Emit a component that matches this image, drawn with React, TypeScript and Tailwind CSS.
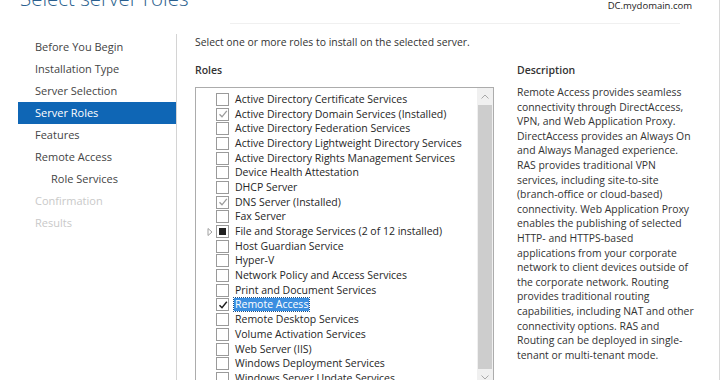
import React from "react";

const font = { fontFamily: '"Open Sans", "Noto Sans", "Liberation Sans", sans-serif' };

type Role = { label: string; state: "none" | "installed" | "checked" | "partial"; expander?: boolean; selected?: boolean };

const roles: Role[] = [
  { label: "Active Directory Certificate Services", state: "none" },
  { label: "Active Directory Domain Services (Installed)", state: "installed" },
  { label: "Active Directory Federation Services", state: "none" },
  { label: "Active Directory Lightweight Directory Services", state: "none" },
  { label: "Active Directory Rights Management Services", state: "none" },
  { label: "Device Health Attestation", state: "none" },
  { label: "DHCP Server", state: "none" },
  { label: "DNS Server (Installed)", state: "installed" },
  { label: "Fax Server", state: "none" },
  { label: "File and Storage Services (2 of 12 installed)", state: "partial", expander: true },
  { label: "Host Guardian Service", state: "none" },
  { label: "Hyper-V", state: "none" },
  { label: "Network Policy and Access Services", state: "none" },
  { label: "Print and Document Services", state: "none" },
  { label: "Remote Access", state: "checked", selected: true },
  { label: "Remote Desktop Services", state: "none" },
  { label: "Volume Activation Services", state: "none" },
  { label: "Web Server (IIS)", state: "none" },
  { label: "Windows Deployment Services", state: "none" },
  { label: "Windows Server Update Services", state: "none" },
];

const desc = [
  "Remote Access provides seamless",
  "connectivity through DirectAccess,",
  "VPN, and Web Application Proxy.",
  "DirectAccess provides an Always On",
  "and Always Managed experience.",
  "RAS provides traditional VPN",
  "services, including site-to-site",
  "(branch-office or cloud-based)",
  "connectivity. Web Application Proxy",
  "enables the publishing of selected",
  "HTTP- and HTTPS-based",
  "applications from your corporate",
  "network to client devices outside of",
  "the corporate network. Routing",
  "provides traditional routing",
  "capabilities, including NAT and other",
  "connectivity options. RAS and",
  "Routing can be deployed in single-",
  "tenant or multi-tenant mode.",
];

const nav: { label: string; active?: boolean; indent?: boolean; disabled?: boolean }[] = [
  { label: "Before You Begin" },
  { label: "Installation Type" },
  { label: "Server Selection" },
  { label: "Server Roles", active: true },
  { label: "Features" },
  { label: "Remote Access" },
  { label: "Role Services", indent: true },
  { label: "Confirmation", disabled: true },
  { label: "Results", disabled: true },
];

function Check({ state }: { state: Role["state"] }) {
  return (
    <div className="w-[13px] h-[13px] border border-[#9a9a9a] bg-white flex items-center justify-center shrink-0">
      {state === "installed" && (
        <svg width="10" height="10" viewBox="0 0 10 10">
          <path d="M1.5 5.2 L4 7.8 L8.8 1.8" fill="none" stroke="#9b9b9b" strokeWidth="1.3" />
        </svg>
      )}
      {state === "checked" && (
        <svg width="10" height="10" viewBox="0 0 10 10">
          <path d="M1.5 5.2 L4 7.8 L8.8 1.8" fill="none" stroke="#1a1a1a" strokeWidth="1.4" />
        </svg>
      )}
      {state === "partial" && <div className="w-[7px] h-[7px] bg-[#222]" />}
    </div>
  );
}

export default function App() {
  return (
    <div className="w-[720px] h-[380px] overflow-hidden bg-white relative text-[#333]" style={font}>
      <div className="absolute right-0 top-0 bottom-0 w-px bg-[#d8d8d8]" />
      {/* header */}
      <div className="h-[34px] relative flex">
        <div className="pl-[20px] h-[24px] overflow-hidden flex-1">
          <div className="text-[20.5px] leading-[24px] font-light text-[#2b5f8e] mt-[-14px] whitespace-nowrap">
            Select server roles
          </div>
        </div>
        <div className="pr-[28px] text-[9.5px] leading-[11px] text-[#222]">DC.mydomain.com</div>
        <div className="absolute left-[230px] right-[40px] top-[23px] h-px bg-[#f0f0f0]" />
      </div>
      <div className="flex h-[346px]">
        {/* nav */}
        <div className="w-[177px] border-r border-[#d4d4d4] pt-[2px] shrink-0">
          {nav.map((n) => (
            <div
              key={n.label}
              className={
                "h-[22px] flex items-center text-[11px] whitespace-nowrap ml-[18px] pl-[17px] " +
                (n.active ? "bg-[#0f66b5] text-white" : n.disabled ? "text-[#c9c9c9]" : "text-[#444]")
              }
            >
              <span className={n.indent ? "pl-[16px]" : ""}>{n.label}</span>
            </div>
          ))}
        </div>
        {/* main */}
        <div className="pl-[18px] flex gap-[23px]">
          <div className="w-[299px] flex flex-col shrink-0">
            <div className="h-[16px] text-[10.4px] leading-[16px] whitespace-nowrap text-[#333]">
              Select one or more roles to install on the selected server.
            </div>
            <div className="h-[15px] mt-[13px] text-[10.5px] leading-[15px] font-semibold text-[#333]">Roles</div>
            <div className="mt-[9px] h-[300px] border border-[#acacac] flex">
              <div className="flex-1 min-w-0 overflow-hidden pt-[4px]">
                {roles.map((r) => (
                  <div key={r.label} className="h-[14.7px] flex items-center">
                    <div className="w-[20px] flex justify-end pr-[3px] shrink-0">
                      {r.expander && (
                        <svg width="6" height="8" viewBox="0 0 6 8">
                          <path d="M1 0.5 L5 4 L1 7.5 Z" fill="none" stroke="#a0a0a0" strokeWidth="1" />
                        </svg>
                      )}
                    </div>
                    <Check state={r.state} />
                    <span
                      className={
                        "ml-[5px] text-[10.5px] leading-[13px] whitespace-nowrap px-px " +
                        (r.selected ? "bg-[#3a8ee0] text-white outline outline-1 outline-dotted outline-[#1c4f85]" : "text-[#262626]")
                      }
                    >
                      {r.label}
                    </span>
                  </div>
                ))}
              </div>
              <div className="w-[16px] shrink-0 flex flex-col bg-[#f0f0f0]">
                <div className="h-[17px] flex items-center justify-center">
                  <svg width="8" height="5" viewBox="0 0 8 5">
                    <path d="M0.5 4.5 L4 1 L7.5 4.5" fill="none" stroke="#a8a8a8" strokeWidth="1" />
                  </svg>
                </div>
                <div className="flex-1 mx-px bg-[#cdcdcd]" />
                <div className="h-[17px] flex items-center justify-center">
                  <svg width="8" height="5" viewBox="0 0 8 5">
                    <path d="M0.5 0.5 L4 4 L7.5 0.5" fill="none" stroke="#a8a8a8" strokeWidth="1" />
                  </svg>
                </div>
              </div>
            </div>
          </div>
          <div className="flex flex-col w-[200px]">
            <div className="h-[15px] mt-[29px] text-[10.5px] leading-[15px] font-semibold text-[#333]">Description</div>
            <div className="mt-[7px] text-[10.4px] leading-[14.6px] text-[#333]">
              {desc.map((l, i) => (
                <div key={i} className="whitespace-nowrap">{l}</div>
              ))}
            </div>
          </div>
        </div>
      </div>
    </div>
  );
}
